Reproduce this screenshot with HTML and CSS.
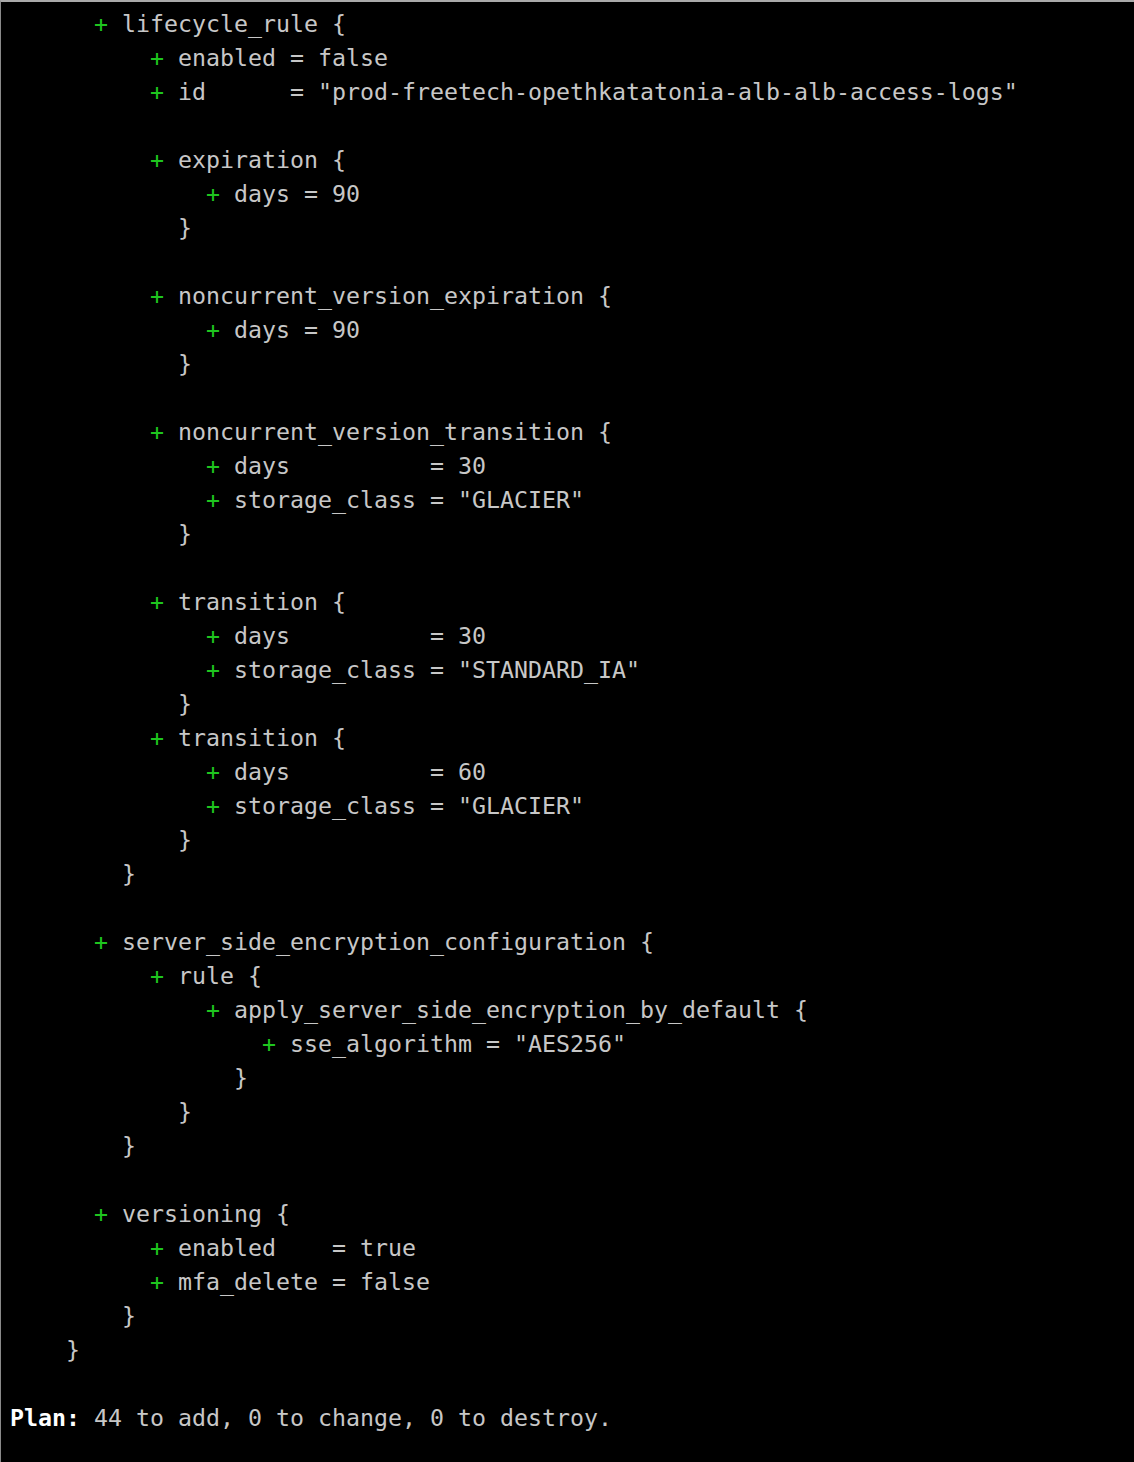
FILE: index.html
```html
<!DOCTYPE html>
<html>
<head>
<meta charset="utf-8">
<link rel="stylesheet" href="styles.css">
</head>
<body>
<div class="terminal">
  <div class="line i3"><span class="add">+</span> lifecycle_rule {</div>
  <div class="line i5"><span class="add">+</span> enabled = false</div>
  <div class="line i5"><span class="add">+</span> id      = "prod-freetech-opethkatatonia-alb-alb-access-logs"</div>
  <div class="line"></div>
  <div class="line i5"><span class="add">+</span> expiration {</div>
  <div class="line i7"><span class="add">+</span> days = 90</div>
  <div class="line i6">}</div>
  <div class="line"></div>
  <div class="line i5"><span class="add">+</span> noncurrent_version_expiration {</div>
  <div class="line i7"><span class="add">+</span> days = 90</div>
  <div class="line i6">}</div>
  <div class="line"></div>
  <div class="line i5"><span class="add">+</span> noncurrent_version_transition {</div>
  <div class="line i7"><span class="add">+</span> days          = 30</div>
  <div class="line i7"><span class="add">+</span> storage_class = "GLACIER"</div>
  <div class="line i6">}</div>
  <div class="line"></div>
  <div class="line i5"><span class="add">+</span> transition {</div>
  <div class="line i7"><span class="add">+</span> days          = 30</div>
  <div class="line i7"><span class="add">+</span> storage_class = "STANDARD_IA"</div>
  <div class="line i6">}</div>
  <div class="line i5"><span class="add">+</span> transition {</div>
  <div class="line i7"><span class="add">+</span> days          = 60</div>
  <div class="line i7"><span class="add">+</span> storage_class = "GLACIER"</div>
  <div class="line i6">}</div>
  <div class="line i4">}</div>
  <div class="line"></div>
  <div class="line i3"><span class="add">+</span> server_side_encryption_configuration {</div>
  <div class="line i5"><span class="add">+</span> rule {</div>
  <div class="line i7"><span class="add">+</span> apply_server_side_encryption_by_default {</div>
  <div class="line i9"><span class="add">+</span> sse_algorithm = "AES256"</div>
  <div class="line i8">}</div>
  <div class="line i6">}</div>
  <div class="line i4">}</div>
  <div class="line"></div>
  <div class="line i3"><span class="add">+</span> versioning {</div>
  <div class="line i5"><span class="add">+</span> enabled    = true</div>
  <div class="line i5"><span class="add">+</span> mfa_delete = false</div>
  <div class="line i4">}</div>
  <div class="line i2">}</div>
  <div class="line"></div>
  <div class="line"><span class="strong">Plan:</span> 44 to add, 0 to change, 0 to destroy.</div>
</div>
</body>
</html>
```
FILE: styles.css
```css
html, body {
  margin: 0;
  padding: 0;
  background: #000;
}

.terminal {
  box-sizing: border-box;
  min-height: 100vh;
  background: #000;
  border-top: 2px solid #a9a9a9;
  border-left: 1px solid #8a8a8a;
  padding: 5px 0 0 9px;
  font-family: "DejaVu Sans Mono", "Liberation Mono", monospace;
  font-size: 23.26px;
  line-height: 34px;
  color: #c7c7c7;
}

.line {
  height: 34px;
  white-space: pre;
}

/* one indent unit = two character cells (28px) */
.i2 { padding-left: 56px; }
.i3 { padding-left: 84px; }
.i4 { padding-left: 112px; }
.i5 { padding-left: 140px; }
.i6 { padding-left: 168px; }
.i7 { padding-left: 196px; }
.i8 { padding-left: 224px; }
.i9 { padding-left: 252px; }

.add {
  color: #1fc51f;
}

.strong {
  color: #ffffff;
  font-weight: bold;
}
```
